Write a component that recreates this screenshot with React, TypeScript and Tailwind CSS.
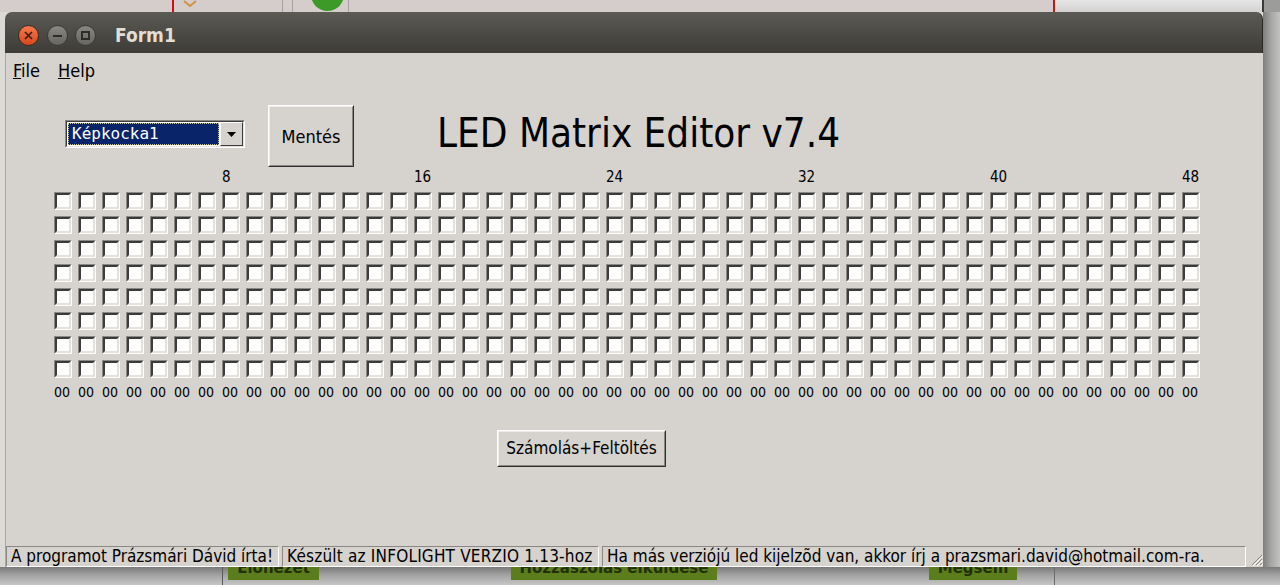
const COLS = 48;
const ROWS = 8;

const cols = Array.from({ length: COLS }, (_, i) => i);
const rows = Array.from({ length: ROWS }, (_, i) => i);

// Sunken 3D checkbox, classic widget look
function Cell() {
  return (
    <div className="h-[18px] w-[18px] border border-t-[#8a8884] border-l-[#8a8884] border-b-white border-r-white">
      <div className="h-full w-full border-2 border-t-[#3c3c3c] border-l-[#3c3c3c] border-b-[#e4e1dc] border-r-[#e4e1dc] bg-white" />
    </div>
  );
}

function RaisedButton({ label, className }: { label: string; className: string }) {
  return (
    <div className={`border border-t-white border-l-white border-b-[#2e2e2e] border-r-[#2e2e2e] ${className}`}>
      <div className="flex h-full w-full items-center justify-center border border-t-[#ecebe8] border-l-[#ecebe8] border-b-[#8a8884] border-r-[#8a8884] text-black">
        {label}
      </div>
    </div>
  );
}

function TitleBar() {
  return (
    <div className="flex h-[41px] items-center rounded-t-[7px] border-r border-[#2a2926] bg-gradient-to-b from-[#5c5a54] to-[#3d3c38] pl-[13px] pt-[6px]">
      <div className="flex h-[21px] w-[21px] items-center justify-center rounded-full border border-[#3a2a20] bg-gradient-to-b from-[#f47a4c] to-[#d8461a]">
        <svg width="9" height="9" viewBox="0 0 9 9">
          <path d="M1 1 L8 8 M8 1 L1 8" stroke="#3b1a0c" strokeWidth="1.6" />
        </svg>
      </div>
      <div className="ml-[8px] flex h-[21px] w-[21px] items-center justify-center rounded-full border border-[#3a3936] bg-gradient-to-b from-[#8a8883] to-[#676560]">
        <div className="h-[2px] w-[9px] bg-[#2e2d2a]" />
      </div>
      <div className="ml-[7px] flex h-[21px] w-[21px] items-center justify-center rounded-full border border-[#3a3936] bg-gradient-to-b from-[#8a8883] to-[#676560]">
        <div className="h-[9px] w-[9px] border-2 border-[#2e2d2a]" />
      </div>
      <span className="ml-[19px] font-['DejaVu_Sans_Condensed',sans-serif] text-[19px] font-bold text-[#e2ded4]">
        Form1
      </span>
    </div>
  );
}

function FrameSelect() {
  return (
    <div className="flex h-[28px] w-[180px] border border-t-[#8a8884] border-l-[#8a8884] border-b-white border-r-white">
      <div className="flex flex-1 border border-t-[#3c3c3c] border-l-[#3c3c3c] border-b-[#e4e1dc] border-r-[#e4e1dc] bg-white">
        <div className="m-[1px] flex flex-1 items-center border border-dotted border-[#c8c8a0] bg-[#0a246a] pl-[3px] font-['DejaVu_Sans_Mono',monospace] text-[16px] text-white">
          Képkocka1
        </div>
        <div className="flex w-[23px] items-center justify-center border border-t-white border-l-white border-b-[#3c3c3c] border-r-[#3c3c3c] bg-[#d6d2cd]">
          <svg width="9" height="5" viewBox="0 0 9 5">
            <path d="M0 0 H9 L4.5 5 Z" fill="#000" />
          </svg>
        </div>
      </div>
    </div>
  );
}

function Matrix() {
  return (
    <div className="ml-[48px]">
      <div className="mt-[2px] grid h-[16px] grid-cols-[repeat(48,18px)] gap-x-[6px] text-[15px] leading-[16px] text-black">
        {cols.map((c) => (
          <span key={c} className="whitespace-nowrap">
            {(c + 1) % 8 === 0 ? c + 1 : ''}
          </span>
        ))}
      </div>
      <div className="mt-[7px] grid grid-cols-[repeat(48,18px)] gap-[6px]">
        {rows.map((r) => cols.map((c) => <Cell key={`${r}-${c}`} />))}
      </div>
      <div className="mt-[6px] grid h-[17px] grid-cols-[repeat(48,18px)] gap-x-[6px] text-[14px] leading-[17px] text-black">
        {cols.map((c) => (
          <span key={c} className="whitespace-nowrap">
            00
          </span>
        ))}
      </div>
    </div>
  );
}

function StatusPanel({ text, className }: { text: string; className: string }) {
  return (
    <div
      className={`flex h-full items-center overflow-hidden whitespace-nowrap border border-t-[#8a8884] border-l-[#8a8884] border-b-white border-r-white pl-[4px] ${className}`}
    >
      {text}
    </div>
  );
}

function StatusBar() {
  return (
    <div className="flex h-[21px] gap-[3px] font-['DejaVu_Sans_Condensed',sans-serif] text-[17px] leading-none text-black">
      <StatusPanel className="w-[273px]" text="A programot Prázsmári Dávid írta!" />
      <StatusPanel className="w-[317px] tracking-[0.2px]" text="Készült az INFOLIGHT VERZIO 1.13-hoz" />
      <StatusPanel className="flex-1" text="Ha más verziójú led kijelzõd van, akkor írj a prazsmari.david@hotmail.com-ra." />
      <div className="flex w-[14px] items-end justify-end pb-[1px]">
        <svg width="13" height="13" viewBox="0 0 13 13">
          <path d="M12 2 L2 12 M12 6 L6 12 M12 10 L10 12" stroke="#8a8884" strokeWidth="1" />
          <path d="M13 3 L3 13 M13 7 L7 13 M13 11 L11 13" stroke="#ffffff" strokeWidth="1" />
        </svg>
      </div>
    </div>
  );
}

function Client() {
  return (
    <div className="flex flex-1 flex-col border-l border-[#a9a7a3] bg-[#d6d2cd] font-['DejaVu_Sans_Condensed',sans-serif]">
      {/* menu */}
      <div className="flex h-[35px] items-center gap-[18px] pl-[7px] text-[18px] text-black">
        <span>
          <span className="underline">F</span>ile
        </span>
        <span>
          <span className="underline">H</span>elp
        </span>
      </div>

      <div className="mt-[17px] flex items-start">
        <div className="ml-[59px] mt-[15px]">
          <FrameSelect />
        </div>
        <RaisedButton label="Mentés" className="ml-[23px] h-[62px] w-[86px] text-[18px]" />
        <h1 className="ml-[83px] mt-[6px] text-[40px] leading-[44px] text-black">LED Matrix Editor v7.4</h1>
      </div>

      <Matrix />

      <RaisedButton label="Számolás+Feltöltés" className="ml-[491px] mt-[29px] h-[37px] w-[169px] text-[17px]" />

      <div className="flex-1" />
      <StatusBar />
    </div>
  );
}

function TopStrip() {
  return (
    <div className="flex h-[12px] items-stretch bg-[#d5cccc]">
      <div className="w-[172px]" />
      <div className="w-[2px] bg-[#d01010]" />
      <div className="ml-[9px] flex items-start">
        <svg width="14" height="8" viewBox="0 0 14 8">
          <path d="M1 1 L7 6 L13 1" stroke="#d49040" strokeWidth="2" fill="none" />
        </svg>
      </div>
      <div className="ml-[85px] w-[1px] bg-[#a8a0a0]" />
      <div className="ml-[9px] w-[1px] bg-[#a8a0a0]" />
      <div className="ml-[18px] h-[12px] w-[33px] overflow-hidden">
        <div className="-mt-[22px] h-[33px] w-[33px] rounded-full bg-[#3e9a28]" />
      </div>
      <div className="ml-[4px] w-[1px] bg-[#a8a0a0]" />
      <div className="w-[704px]" />
      <div className="w-[2px] bg-[#d01010]" />
      <div className="w-[207px] bg-gradient-to-b from-[#e6e6e6] to-[#d2d2d2]" />
      <div className="w-[2px] bg-[#3a3a3a]" />
      <div className="flex-1 bg-[#9c9c9a]" />
    </div>
  );
}

function GreenButton({ label, className }: { label: string; className: string }) {
  return (
    <div className={`h-[13px] overflow-hidden bg-[#5b7d1c] text-center ${className}`}>
      <div className="-mt-[8px] whitespace-nowrap font-['DejaVu_Sans',sans-serif] text-[15px] font-bold leading-[18px] text-[#223008]">
        {label}
      </div>
    </div>
  );
}

function BottomStrip() {
  return (
    <div className="flex h-[18px] items-start bg-gradient-to-b from-[#7a7a7a] via-[#a6a6a6] to-[#c6c6c6]">
      <div className="ml-[222px] h-full w-[1px] bg-[#5a5a5a]" />
      <GreenButton label="Előnézet" className="ml-[5px] w-[91px]" />
      <GreenButton label="Hozzászólás elküldése" className="ml-[192px] w-[206px]" />
      <GreenButton label="Mégsem" className="ml-[212px] w-[88px]" />
      <div className="ml-[37px] h-full w-[1px] bg-[#6a6a6a]" />
    </div>
  );
}

export default function App() {
  return (
    <div className="h-[585px] w-[1280px] overflow-hidden bg-[#dcdad6]">
      <TopStrip />
      <div className="flex h-[555px]">
        <div className="ml-[5px] flex w-[1258px] flex-col">
          <TitleBar />
          <Client />
        </div>
        <div className="flex-1 bg-gradient-to-r from-[#7e7e7c] via-[#a8a8a6] to-[#c2c2c0]" />
      </div>
      <BottomStrip />
    </div>
  );
}
